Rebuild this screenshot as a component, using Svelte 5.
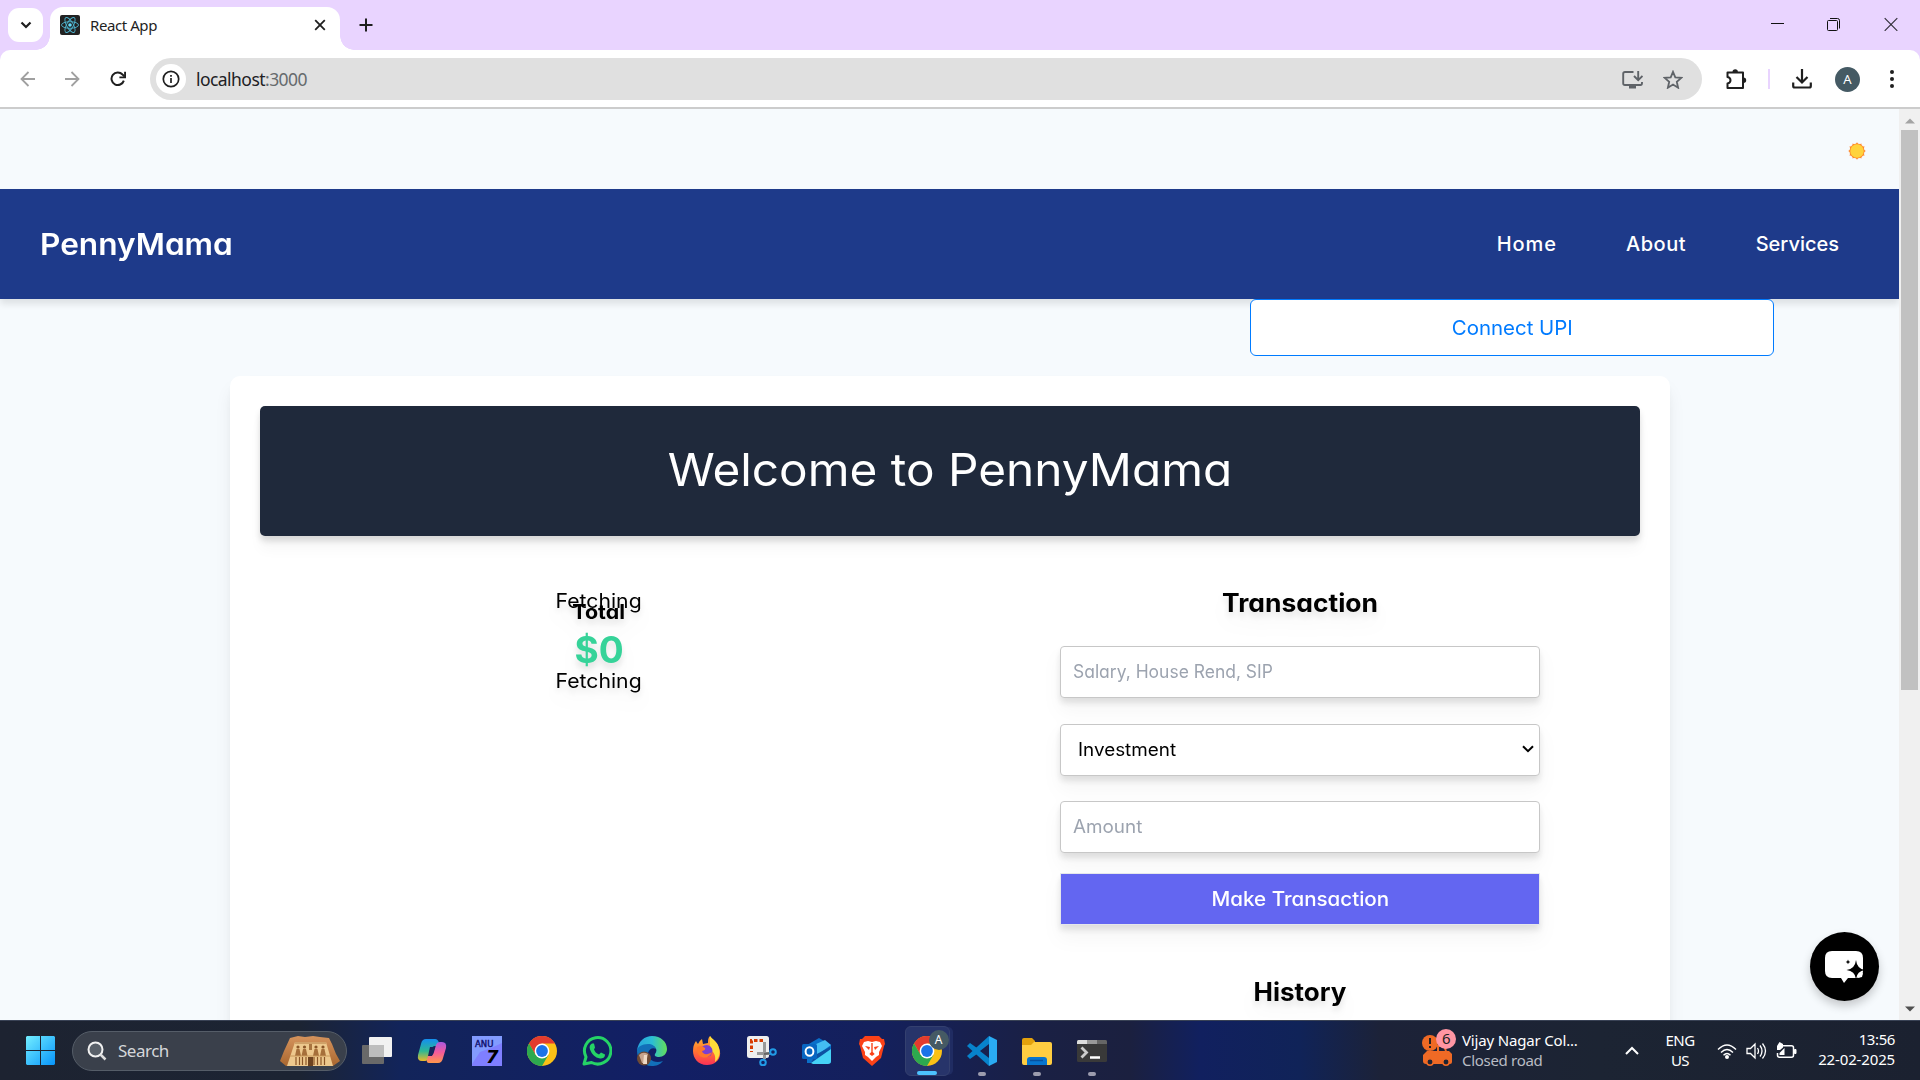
<script>
  const links = ['Home', 'About', 'Services'];
  const apps = ['tasks', 'copilot', 'anu', 'chrome', 'whatsapp', 'edge', 'firefox', 'snip', 'outlook', 'brave', 'profile', 'code', 'folder', 'terminal'];
  const running = ['code', 'folder', 'terminal'];
  const angles = [0, 60, 120];
  const spikes = Array.from({ length: 12 }, (_, i) => i * 30);
</script>

{#snippet chrome()}
  <circle cx="15" cy="15" r="15" fill="#fbc116" />
  <path d="M2 7.5A15 15 0 0 1 28 7.5H15l-6.5 11.3z" fill="#e33b2e" />
  <path d="M2 7.5A15 15 0 0 0 15 30l6.5-11.3H8.5z" fill="#2da94f" />
  <circle cx="15" cy="15" r="7.4" fill="#fff" />
  <circle cx="15" cy="15" r="5.9" fill="#1a73e8" />
{/snippet}

{#snippet appIcon(name)}
  <svg class="app-icon" viewBox="0 0 30 30">
    {#if name === 'tasks'}
      <rect x="0" y="9" width="22" height="19" rx="1" fill="#696969" />
      <rect x="7" y="1" width="23" height="20" rx="1" fill="#f1f1f1" />
      <path d="M7 9h15v12H7z" fill="#bdbdbd" />
    {:else if name === 'copilot'}
      <path d="M9 3h9q3 0 4 4l1 3h-5q-3 0-4 4l-2 7q-1 4-4 4H5q-5 0-4-6L4 8q1-5 5-5z" fill="url(#cop1)" />
      <path d="M21 27h-9q-3 0-2-4l1-3h2q3 0 4-4l2-7q1-3 4-3h2q5 0 4 6l-3 10q-1 5-5 5z" fill="url(#cop2)" />
      <path d="m13 11 5 0-3 9h-4z" fill="#17255c" />
    {:else if name === 'anu'}
      <rect width="30" height="30" fill="#7f7fff" />
      <path d="M0 0h30v7L19 12 8 16 0 28z" fill="#829bff" />
      <text x="3" y="10.500" class="anu-name">ANU</text>
      <text x="14" y="27" class="anu-seven">7</text>
    {:else if name === 'chrome'}
      {@render chrome()}
    {:else if name === 'profile'}
      {@render chrome()}
    {:else if name === 'whatsapp'}
      <path d="M2 28 4 21A13.2 13.2 0 1 1 9.500 26.500z" fill="none" stroke="#25d366" stroke-width="3" stroke-linejoin="round" />
      <path d="M10 7.500c-2 1-3 3-2 6 2 5 5 8 10 9 3 0 5-1 5-4l-4-2-2 2c-3-1-4-3-5-5l1-2-1-4z" fill="#25d366" />
    {:else if name === 'edge'}
      <path d="M0 15C1 5 8 0 15 0c9 0 15 6 15 13 0 5-4 8-8 8-3 0-5-1-4-3 4-5-1-9-6-9C6 9 1 12 0 15z" fill="url(#edgeTop)" />
      <path d="M0 15c0-4 5-7 11-7 4 0 7 2 8 5-3-2-7 0-8 4-1 6 6 11 15 8-3 4-7 5-11 5C6 30 0 23 0 15z" fill="#1270b9" />
      <circle cx="7" cy="22.500" r="7" fill="#6e4a35" />
      <path d="M2 19q4-4 9-1l-2 9H5z" fill="#c7a48d" /><path d="M7 19h3v9H6z" fill="#f0d9c5" />
    {:else if name === 'firefox'}
      <path d="M4 5q1 2 2 3 1-3 4-5l1 5 5-1c0-3 0-5 2-7 1 4 7 4 9 12 4 10-3 17-12 17C6 29 1 22 1 15Q1 9 4 5z" fill="url(#fox)" />
      <path d="M18 0c2 3 7 5 9 12 2 6-1 12-4 14 1-7-1-10-5-12z" fill="#ffdd39" />
      <circle cx="14.500" cy="15" r="6" fill="#7b3fd1" />
      <path d="M5 11q5-2 8 1 1 2-3 3c1 4 6 4 10 1-2 7-13 8-15-1z" fill="#ff762c" />
    {:else if name === 'snip'}
      <rect width="22" height="22" rx="2.500" fill="#eee" />
      <path d="M16 4.500H4.500V16" fill="none" stroke="#d83b01" stroke-width="3" stroke-dasharray="3.500 2" />
      <path d="M17.500 6v17M10 17.500h13" stroke="#999" stroke-width="3" />
      <path d="m17 18 7-1" stroke="#666" stroke-width="2" />
      <circle cx="26" cy="16" r="2.800" fill="none" stroke="#219be6" stroke-width="2" />
      <circle cx="16" cy="26.500" r="2.800" fill="none" stroke="#219be6" stroke-width="2" />
    {:else if name === 'outlook'}
      <path d="M5 9 17 2l12 7v18H5z" fill="#0a6fc9" />
      <path d="M12 9 23 4l6 5-14 10z" fill="#44bdf3" /><path d="m13 19 15-8 1 16H9z" fill="#0d51a2" />
      <path d="m9 27 20-14v12q0 3-3 3H11z" fill="#46d2f6" />
      <rect x="0" y="8" width="15" height="15" rx="1.500" fill="#0866c2" />
      <ellipse cx="7.500" cy="15.500" rx="3.900" ry="4.300" fill="none" stroke="#fff" stroke-width="2" />
    {:else if name === 'brave'}
      <path d="m8 0h14l3 3h2l1 5-1 2-3 12-9 8-9-8L3 10 2 8l1-5h2z" fill="#fb4218" />
      <path d="m7 6 4-1 4 1 4-1 4 1 2 4-3 6 0 3-3 2-4 4-4-4-3-2 0-3-3-6z" fill="#fff" />
      <path d="m8 10 5 1-1 3zM22 10l-5 1 1 3zM14.300 7h1.400v9l2 2-2.700 2-2.700-2 2-2z" fill="#fb4218" />
    {:else if name === 'code'}
      <path d="M22 0 0 20l3 3L24 8z" fill="#0783cc" /><path d="m0 10 3-3 21 15-2 8z" fill="#0783cc" />
      <path d="m22 0 8 4v22l-8 4z" fill="#2aabf2" /><path d="M22 8v14l-9-7z" fill="#17204d" />
    {:else if name === 'folder'}
      <path d="M0 4q0-2 2-2h8l3 3v5H0z" fill="#e3a10c" />
      <path d="M0 9h9l3-3h16q2 0 2 2v19q0 2-2 2H2q-2 0-2-2z" fill="#ffcd41" />
      <path d="M5 29v-5q0-3 3-3h14q3 0 3 3v5z" fill="#0875ce" /><path d="M8 24.500h13" stroke="#07519e" stroke-width="1.500" />
    {:else}
      <rect x="0" y="4" width="30" height="22" rx="1.500" fill="#393939" />
      <path d="M0 8V5.500Q0 4 1.500 4H10v4z" fill="#ddd" /><path d="M10 4h10v4H10z" fill="#999" /><path d="M20 4h8.500Q30 4 30 5.500V8H20z" fill="#666" />
      <path d="m4.500 11.500 5 5-5 5" fill="none" stroke="#ccc" stroke-width="2.800" /><path d="M13 21.500h10" stroke="#fff" stroke-width="2.500" />
    {/if}
  </svg>
{/snippet}

<div class="screen">
  <svg class="defs" width="0" height="0">
    <defs>
      <linearGradient id="cop1" x2="0" y2="1"><stop stop-color="#148ef0" /><stop offset=".55" stop-color="#2db894" /><stop offset="1" stop-color="#edb928" /></linearGradient>
      <linearGradient id="cop2" x2="0" y2="1"><stop stop-color="#a959df" /><stop offset=".5" stop-color="#f45b9a" /><stop offset="1" stop-color="#ff974b" /></linearGradient>
      <linearGradient id="edgeTop"><stop stop-color="#27a5dc" /><stop offset=".5" stop-color="#2bbdd5" /><stop offset="1" stop-color="#63df59" /></linearGradient>
      <linearGradient id="fox" x2="0" y2="1"><stop stop-color="#ffb62e" /><stop offset=".5" stop-color="#ff7631" /><stop offset="1" stop-color="#fb3157" /></linearGradient>
      <linearGradient id="win" x2="1" y2="1"><stop stop-color="#73eeff" /><stop offset="1" stop-color="#0794fa" /></linearGradient>
      <linearGradient id="stone" x2="0" y2="1"><stop stop-color="#d5935c" /><stop offset="1" stop-color="#aa672f" /></linearGradient>
    </defs>
  </svg>

  <header class="tabstrip">
    <button class="tab-search" aria-label="Search tabs"><svg width="12" height="8" viewBox="0 0 12 8"><path d="m1.500 1.500 4.500 4.500 4.500-4.500" fill="none" stroke="#1f1f1f" stroke-width="2.200" /></svg></button>
    <div class="tab">
      <svg class="favicon" width="20" height="20" viewBox="0 0 20 20">
        <rect width="20" height="20" rx="2" fill="#222" />
        {#each angles as a}<ellipse cx="10" cy="10" rx="8.500" ry="3.300" transform="rotate({a} 10 10)" fill="none" stroke="#4eb4cf" stroke-width=".9" />{/each}
        <circle cx="10" cy="10" r="1.800" fill="#61dafb" />
      </svg>
      <span class="tab-title">React App</span>
      <svg width="12" height="12" viewBox="0 0 12 12"><path d="m1.200 1.200 9.600 9.600m0-9.600-9.600 9.600" stroke="#1f1f1f" stroke-width="1.800" /></svg>
    </div>
    <svg class="new-tab" width="14" height="14" viewBox="0 0 14 14"><path d="M7 .5v13M.5 7h13" stroke="#1f1f1f" stroke-width="2" /></svg>
    <div class="window-controls">
      <svg width="14" height="14" viewBox="0 0 14 14"><path d="M1 6.500h13" stroke="#111" /></svg>
      <svg width="14" height="14" viewBox="0 0 14 14"><rect x=".5" y="3.500" width="10" height="10" rx="1" fill="none" stroke="#111" /><path d="M3 1.500h7.500q2 0 2 2v8" fill="none" stroke="#111" /></svg>
      <svg width="14" height="14" viewBox="0 0 14 14"><path d="m.7 1.200 12.600 12.600m0-12.600L.7 13.800" stroke="#33303a" stroke-width="1.200" /></svg>
    </div>
  </header>

  <div class="toolbar">
    <svg class="back" width="16" height="16" viewBox="0 0 16 16"><path d="M15 8H2m6.500-7L1.500 8l7 7" fill="none" stroke="#a0a0a0" stroke-width="1.800" /></svg>
    <svg class="forward" width="16" height="16" viewBox="0 0 16 16"><path d="M0 8h13M6.500 1l7 7-7 7" fill="none" stroke="#a0a0a0" stroke-width="1.800" /></svg>
    <svg class="reload" width="16" height="16" viewBox="0 0 17 17"><path d="M14.700 10.200A6.700 6.700 0 1 1 13.300 3.700l2 2" fill="none" stroke="#1f1f1f" stroke-width="2.100" /><path d="M16 .8v6h-6" fill="none" stroke="#1f1f1f" stroke-width="2" /></svg>
    <div class="address">
      <span class="info"><svg width="18" height="18" viewBox="0 0 18 18"><circle cx="9" cy="9" r="7.700" fill="none" stroke="#1f1f1f" stroke-width="1.700" /><path d="M9 8v5M9 5v1.700" stroke="#1f1f1f" stroke-width="1.700" /></svg></span>
      <span class="url">localhost<span>:3000</span></span>
      <svg class="install" width="21" height="19" viewBox="0 0 21 19"><path d="M11.500 2H3Q1.200 2 1.200 3.800v9.400Q1.200 15 3 15h15.500Q20 15 20 13v-1" fill="none" stroke="#5f6368" stroke-width="1.900" /><path d="M7 16h7v2.500H7z" fill="#5f6368" /><path d="M16.200 1v9M12 6l4.200 4.200L20.500 6" fill="none" stroke="#5f6368" stroke-width="1.900" /></svg>
      <svg width="20" height="19" viewBox="0 0 20 19"><path d="m10 1.800 2.300 5.500 6 .5-4.500 4 1.300 5.900-5.100-3.100-5.100 3.100 1.300-5.900-4.500-4 6-.5z" fill="none" stroke="#5f6368" stroke-width="1.800" /></svg>
    </div>
    <svg class="ext" width="21" height="21" viewBox="0 0 21 21"><path d="M1.500 3.500H17V19H1.500v-4.500q3-.5 3-3.200T1.500 8z" fill="none" stroke="#1f1f1f" stroke-width="2" stroke-linejoin="round" /><path d="M6.500 3a2.700 2.700 0 0 1 5.400 0zM17.500 8.500a2.700 2.700 0 0 1 0 5.400z" fill="#1f1f1f" /></svg>
    <i class="divider"></i>
    <svg class="download" width="20" height="20" viewBox="0 0 20 20"><path d="M10 0v13M4.500 8l5.500 5.500L15.500 8M1.200 13.500V17q0 1.500 1.500 1.500h14.600q1.500 0 1.500-1.500v-3.500" fill="none" stroke="#1f1f1f" stroke-width="2.200" /></svg>
    <span class="avatar">A</span>
    <svg class="menu" width="4" height="18" viewBox="0 0 4 18"><circle cx="2" cy="2" r="2" /><circle cx="2" cy="9" r="2" /><circle cx="2" cy="16" r="2" /></svg>
  </div>

  <div class="viewport">
    <main class="page">
      <div class="theme-row">
        <svg width="18" height="18" viewBox="0 0 18 18">
          {#each spikes as a}<path d="m9 .2 2.600 4H6.400z" transform="rotate({a} 9 9)" fill="#ff8228" />{/each}
          <circle cx="9" cy="9" r="7.600" fill="#ff8d2e" /><circle cx="9" cy="9" r="6.700" fill="#ffd33c" />
        </svg>
      </div>
      <nav>
        <b class="brand">PennyMama</b>
        <div class="links">{#each links as link}<span class={link.toLowerCase()}>{link}</span>{/each}</div>
      </nav>
      <button class="connect"><span>Connect UPI</span></button>
      <section class="card">
        <h1><span>Welcome to PennyMama</span></h1>
        <div class="columns">
          <div class="chart">
            <p>Fetching</p>
            <div class="total"><b>Total</b><strong>$0</strong></div>
            <p>Fetching</p>
          </div>
          <div class="form">
            <h2 class="h-trans">Transaction</h2>
            <div class="field hint"><span class="salary">Salary, House Rend, SIP</span></div>
            <div class="field select"><span class="wide">Investment</span><svg width="12" height="8" viewBox="0 0 12 8"><path d="m1 1.200 5 5 5-5" fill="none" stroke="#000" stroke-width="2" /></svg></div>
            <div class="field hint last"><span class="wide">Amount</span></div>
            <button class="submit"><span>Make Transaction</span></button>
            <h2 class="h-hist">History</h2>
          </div>
        </div>
      </section>
      <div class="chat">
        <svg width="42" height="34" viewBox="0 0 42 34"><path d="M8 1h24q7 0 7 7v13q0 7-7 7h-8l-4 5-3-5H8q-7 0-7-7V8q0-7 7-7z" fill="#fff" /><path d="M32 10q1 9 9 10-8 1-9 9-1-8-9.500-9Q31 19 32 10zM24 9.500q.3 2 2.300 2.500-2 .3-2.300 2.300-.3-2-2.300-2.300 2-.5 2.300-2.500z" fill="#000" /><path d="m39 23-1 4-4 1q1-4 5-5z" fill="#fff" /></svg>
      </div>
    </main>
    <div class="scrollbar">
      <svg width="10" height="6" viewBox="0 0 10 6"><path d="m0 5.500 5-5 5 5z" fill="#a3a3a3" /></svg>
      <i></i>
      <svg width="10" height="6" viewBox="0 0 10 6"><path d="m0 .5 5 5 5-5z" fill="#505050" /></svg>
    </div>
  </div>

  <footer>
    <svg class="start" width="29" height="29" viewBox="0 0 29 29"><path d="M1 0h13v14H0V1zM15 0h13l1 1v13H15zM0 15h14v14H1l-1-1zM15 15h14v13l-1 1H15z" fill="url(#win)" /></svg>
    <div class="search">
      <svg width="20" height="20" viewBox="0 0 20 20"><circle cx="8.500" cy="8.500" r="7" fill="#596069" stroke="#f1f1f1" stroke-width="2" /><path d="m13.500 13.500 5 5" stroke="#ddd" stroke-width="2.500" /></svg>
      <span>Search</span>
      <svg class="temple" width="60" height="32" viewBox="0 0 60 32">
        <path d="M0 26 4 16 10 3l8-2 7 1 8-1 7 1 9 1 3 6 4 10 4 7-7 5H6z" fill="url(#stone)" />
        <path d="m15 7h31l7 24H7z" fill="#edc88d" /><path d="M15 8h31" stroke="#b27a42" />
        {#each [18, 24.500, 36, 43] as x}<circle cx={x} cy="12" r="1.600" fill="#8a5527" /><path d="M{x - 1.500} 14h3l1.500 7h-6z" fill="#a66f3a" /><path d="M{x - 2} 22v8m3.500-8v8" stroke="#8a5527" stroke-width="1.200" />{/each}
        <path d="M28 22h5v9h-5z" fill="#6f431f" /><path d="M29 9h3v6h-3z" fill="#a8743f" /><path d="M10 21h40" stroke="#c9985a" />
      </svg>
    </div>
    <div class="apps">
      {#each apps as app}
        <div class="app" class:active={app === 'profile'} class:running={running.includes(app)}>
          {@render appIcon(app)}
          {#if app === 'profile'}<span class="badge">A</span>{/if}
        </div>
      {/each}
    </div>
    <div class="news">
      <svg width="34" height="38" viewBox="0 0 34 38"><circle cx="8" cy="14" r="8" fill="#ef6a25" /><path d="M8 9v6M8 17v2" stroke="#222" stroke-width="2" /><path d="M5 22h22l3 3v8q0 2-2 2H4q-3 0-3-3v-6z" fill="#ef6a25" /><path d="M16 22v-5h6l2 5" stroke="#ef6a25" stroke-width="2" fill="none" /><circle cx="8" cy="33" r="3.200" fill="#1e2433" stroke="#ef6a25" stroke-width="1.500" /><circle cx="24" cy="33" r="3.200" fill="#1e2433" stroke="#ef6a25" stroke-width="1.500" /><circle cx="24" cy="10" r="10" fill="#ff96a3" /><text x="20" y="15">6</text></svg>
      <div><span class="news-title">Vijay Nagar Col...</span><span class="news-sub">Closed road</span></div>
    </div>
    <svg class="up" width="14" height="9" viewBox="0 0 14 9"><path d="m1 8 6-6 6 6" fill="none" stroke="#fff" stroke-width="2" /></svg>
    <div class="lang"><span>ENG</span><span>US</span></div>
    <div class="tray">
      <svg width="20" height="16" viewBox="0 0 20 16"><path d="M1 6.500q9-9 18 0M4 9.500q6-6 12 0M6.500 12.200q3.500-3.500 7 0" fill="none" stroke="#fff" stroke-width="1.400" /><circle cx="10" cy="14" r="2" fill="#fff" /></svg>
      <svg width="21" height="18" viewBox="0 0 21 18"><path d="M1 6.500h3.500L9 2v14l-4.500-4.500H1zM11.500 6q2 3 0 6M14 3.500q4 5.500 0 11M16.500 1.500q6 7.500 0 15" fill="none" stroke="#fff" stroke-width="1.300" /></svg>
      <svg width="21" height="18" viewBox="0 0 21 18"><path d="M7 3.700h8.500q2 0 2 2v7.600q0 2-2 2H3.500q-2 0-2-2V11" fill="none" stroke="#fff" stroke-width="1.500" /><path d="M18.500 7.500h1.500v4h-1.500z" fill="#fff" stroke="#fff" /><path d="M3.500 0 7 2v3.500l-3 2.500H1V4zM8.500 6v7H3.500v-2z" fill="#fff" /></svg>
    </div>
    <div class="clock"><span class="time">13:56</span><span class="date">22-02-2025</span></div>
  </footer>
</div>

<style>
  :global(body) { margin: 0; overflow: hidden; }
  * { box-sizing: border-box; }
  svg { display: block; flex: none; }
  .defs { position: absolute; }
  button { border: 0; padding: 0; font: inherit; }
  .screen { width: 1920px; height: 1080px; display: grid; grid-template-rows: 50px 59px 911px 60px; font-family: "Noto Sans", sans-serif; overflow: hidden; white-space: nowrap; background: #e9d4ff; }

  .tabstrip { display: flex; align-items: flex-start; background: #e9d4ff; }
  .tab-search { width: 35px; height: 34px; margin: 8px 7px 0 8px; border-radius: 11px; background: #fff; display: grid; place-items: center; flex: none; }
  .tab { position: relative; width: 290px; height: 43px; margin-top: 7px; padding: 0 14px 7px 10px; background: #fff; border-radius: 13px 13px 0 0; display: flex; align-items: center; }
  .tab::before, .tab::after { content: ""; position: absolute; bottom: 0; width: 14px; height: 14px; }
  .tab::before { right: 100%; background: radial-gradient(circle at 0 0, transparent 13.500px, #fff 14px); }
  .tab::after { left: 100%; background: radial-gradient(circle at 100% 0, transparent 13.500px, #fff 14px); }
  .tab-title { flex: 1; padding: 0 0 1px 10px; font-size: 15px; letter-spacing: -.42px; color: #1f1f1f; }
  .new-tab { margin: 18px 0 0 19px; }
  .window-controls { display: flex; gap: 43px; margin: 17px 22px 0 auto; }

  .toolbar { height: 59px; background: #fff; border-bottom: 2px solid #ccc; border-radius: 10px 10px 0 0; display: flex; align-items: center; padding: 1px 21px 0 20px; }
  .forward { margin-left: 29px; }
  .reload { margin-left: 29px; }
  .address { width: 1552px; height: 42px; margin-left: 24px; border-radius: 21px; background: #e0e0e0; display: flex; align-items: center; padding: 0 19px 0 6px; }
  .info { width: 30px; height: 30px; border-radius: 50%; background: #fff; display: grid; place-items: center; }
  .url { margin-left: 10px; font-size: 17.500px; letter-spacing: -.55px; color: #202124; }
  .url span { color: #666a6d; }
  .install { margin: 0 20px 0 auto; }
  .ext { margin-left: 24px; }
  .divider { width: 2px; height: 20px; margin: 0 22px 0 21px; background: #e9d4ff; }
  .avatar { width: 25px; height: 25px; margin: 0 30px 0 23px; border-radius: 50%; background: #455a64; color: #fff; font-size: 13px; line-height: 25px; text-align: center; }
  .menu { fill: #1f1f1f; }

  .viewport { display: flex; }
  .page { position: relative; width: 1899px; height: 911px; overflow: hidden; background: #f6fafd; font-family: Inter, "Open Sans", sans-serif; font-feature-settings: "cv11"; display: flex; flex-direction: column; }
  .theme-row { height: 80px; flex: none; display: flex; align-items: center; justify-content: flex-end; padding: 4px 33px 0 0; }
  nav { height: 110px; flex: none; padding: 0 60px 0 40px; background: #1e3a8a; color: #fff; display: flex; align-items: center; justify-content: space-between; box-shadow: 0 5px 7px #0000001a; }
  .brand { font-size: 30px; font-weight: 600; transform: scaleX(1.054); transform-origin: left; }
  .links { display: flex; gap: 70px; font-size: 20px; font-weight: 500; }
  .home { letter-spacing: .9px; margin-right: -.9px; }
  .about { letter-spacing: .55px; margin-right: -.5px; }
  .connect { width: 524px; height: 57px; flex: none; margin-left: 1250px; border: 1px solid #007bff; border-radius: 6px; background: #fff; color: #007bff; font-size: 20px; position: relative; }
  .connect span { display: inline-block; transform: scaleX(1.022); }
  .card { width: 1440px; height: 900px; flex: none; margin: 20px 0 0 230px; padding: 30px; background: #fff; border-radius: 10px; box-shadow: 0 12px 19px -4px #0000001a, 0 5px 8px -5px #0000001a; }
  h1 { height: 130px; margin: 0; padding-bottom: 3px; border-radius: 5px; background: #1f293b; color: #fff; font-size: 45px; font-weight: 400; display: grid; place-items: center; box-shadow: 0 5px 6px #0002, 0 14px 14px #00000008; }
  h1 span { transform: scaleX(1.061); }
  .columns { display: flex; padding-top: 50px; filter: drop-shadow(0 5px 3px #0000001a) drop-shadow(0 12px 9px #0000000a); }
  .chart { position: relative; width: 678px; display: flex; flex-direction: column; align-items: center; }
  p { margin: 0; height: 80px; line-height: 30px; font-size: 20px; transform: scaleX(1.06); }
  .total { position: absolute; top: 10px; left: 0; width: 100%; display: flex; flex-direction: column; align-items: center; }
  .total b { font-size: 20px; line-height: 33px; transform: scaleX(1.07); }
  .total strong { font-size: 37px; line-height: 42px; color: #36d399; }
  .form { width: 480px; margin-left: 122px; }
  h2 { margin: 0; font-size: 25px; line-height: 34px; text-align: center; }
  .field { height: 52px; margin-bottom: 25.500px; border: 1px solid #c7c7c7; border-radius: 4px; background: #fff; font-size: 18px; display: flex; align-items: center; padding: 0 5px 1px 12px; }
  .hint { color: #9ca3af; }
  .salary { transform: scaleX(.97); transform-origin: left; }
  .wide { transform: scaleX(1.048); transform-origin: left; }
  .h-trans { margin-bottom: 26px; transform: scaleX(1.058); }
  .select { justify-content: space-between; padding-left: 17px; }
  .last { margin-bottom: 20px; }
  .submit { display: block; width: 100%; height: 52px; border: 1px solid #e5e7eb; background: #6366f1; color: #fff; font-size: 20px; font-weight: 500; }
  .submit span { display: inline-block; transform: scaleX(1.028); }
  .h-hist { margin-top: 50px; transform: scaleX(1.04); }
  .chat { position: absolute; left: 1810px; top: 823px; width: 69px; height: 69px; border-radius: 50%; background: #000; display: grid; place-items: center; box-shadow: 0 5px 10px #0003; }
  .scrollbar { width: 21px; background: #f0f0f0; display: flex; flex-direction: column; align-items: center; padding: 9px 0 8px; justify-content: space-between; }
  .scrollbar i { width: 17px; height: 560px; background: #c1c1c1; margin: 6px 0 auto; }

  footer { border-top: 1px solid #394255; background: linear-gradient(90deg, #1d2331 0, #1c2433 300px, #12245a 400px, #121f65 660px, #14205c 880px, #1a2044 1040px, #1b203f 1130px, #11205f 1200px, #102358 1300px, #1c2238 1380px, #1c2433 1600px, #1b2130); color: #fff; display: flex; align-items: center; }
  .start { margin-left: 26px; }
  .search { width: 275px; height: 40px; margin-left: 17px; border: 1px solid #555d68; border-radius: 20px; background: #3a404b; display: flex; align-items: center; padding: 0 6px 0 14px; font-size: 17px; color: #d5d7da; }
  .search span { margin-left: 11px; letter-spacing: -.5px; }
  .temple { margin-left: auto; }
  .apps { display: flex; margin-left: 2.500px; }
  .app { position: relative; width: 55px; height: 50px; display: grid; place-items: center; }
  .app-icon { width: 30px; height: 30px; }
  .active { width: 45px; margin: 0 5px; background: #27346a; border: 1px solid #34406f; border-radius: 6px; box-shadow: 4px 0 0 -1px #202c62; }
  .app.running::after, .active::after { content: ""; position: absolute; bottom: 0; height: 4px; width: 8px; border-radius: 2px; background: #9c9cae; }
  .active::after { width: 20px; background: #4cc2ff; }
  .badge { position: absolute; right: 0; top: 3px; width: 20px; height: 20px; border-radius: 50%; background: #455a64; font-size: 12px; line-height: 20px; text-align: center; }
  .anu-name { font: 8.500px "DejaVu Sans", sans-serif; fill: #10106e; stroke: #10106e; stroke-width: .4px; }
  .anu-seven { font: italic bold 18px "DejaVu Sans", sans-serif; fill: #000; }
  .news { display: flex; margin-left: auto; gap: 6px; width: 203px; font-size: 15px; }
  .news svg { margin-top: -3px; }
  .news text { font-size: 15px; fill: #222; }
  .news div { display: flex; flex-direction: column; line-height: 20px; letter-spacing: -.3px; margin-top: -2px; }
  .news-title { letter-spacing: -.17px; }
  .news-sub { color: #b9bcc4; }
  .lang { width: 40px; margin: -2px 0 0 21px; display: flex; flex-direction: column; align-items: center; font-size: 15px; line-height: 20px; letter-spacing: -.5px; }
  .tray { display: flex; align-items: center; gap: 9px; margin-left: 17px; }
  .clock { width: 98px; margin: -3px 25px 0 0; display: flex; flex-direction: column; align-items: flex-end; font-size: 15px; line-height: 20px; letter-spacing: -.15px; }
  .time { letter-spacing: -.4px; }
</style>
